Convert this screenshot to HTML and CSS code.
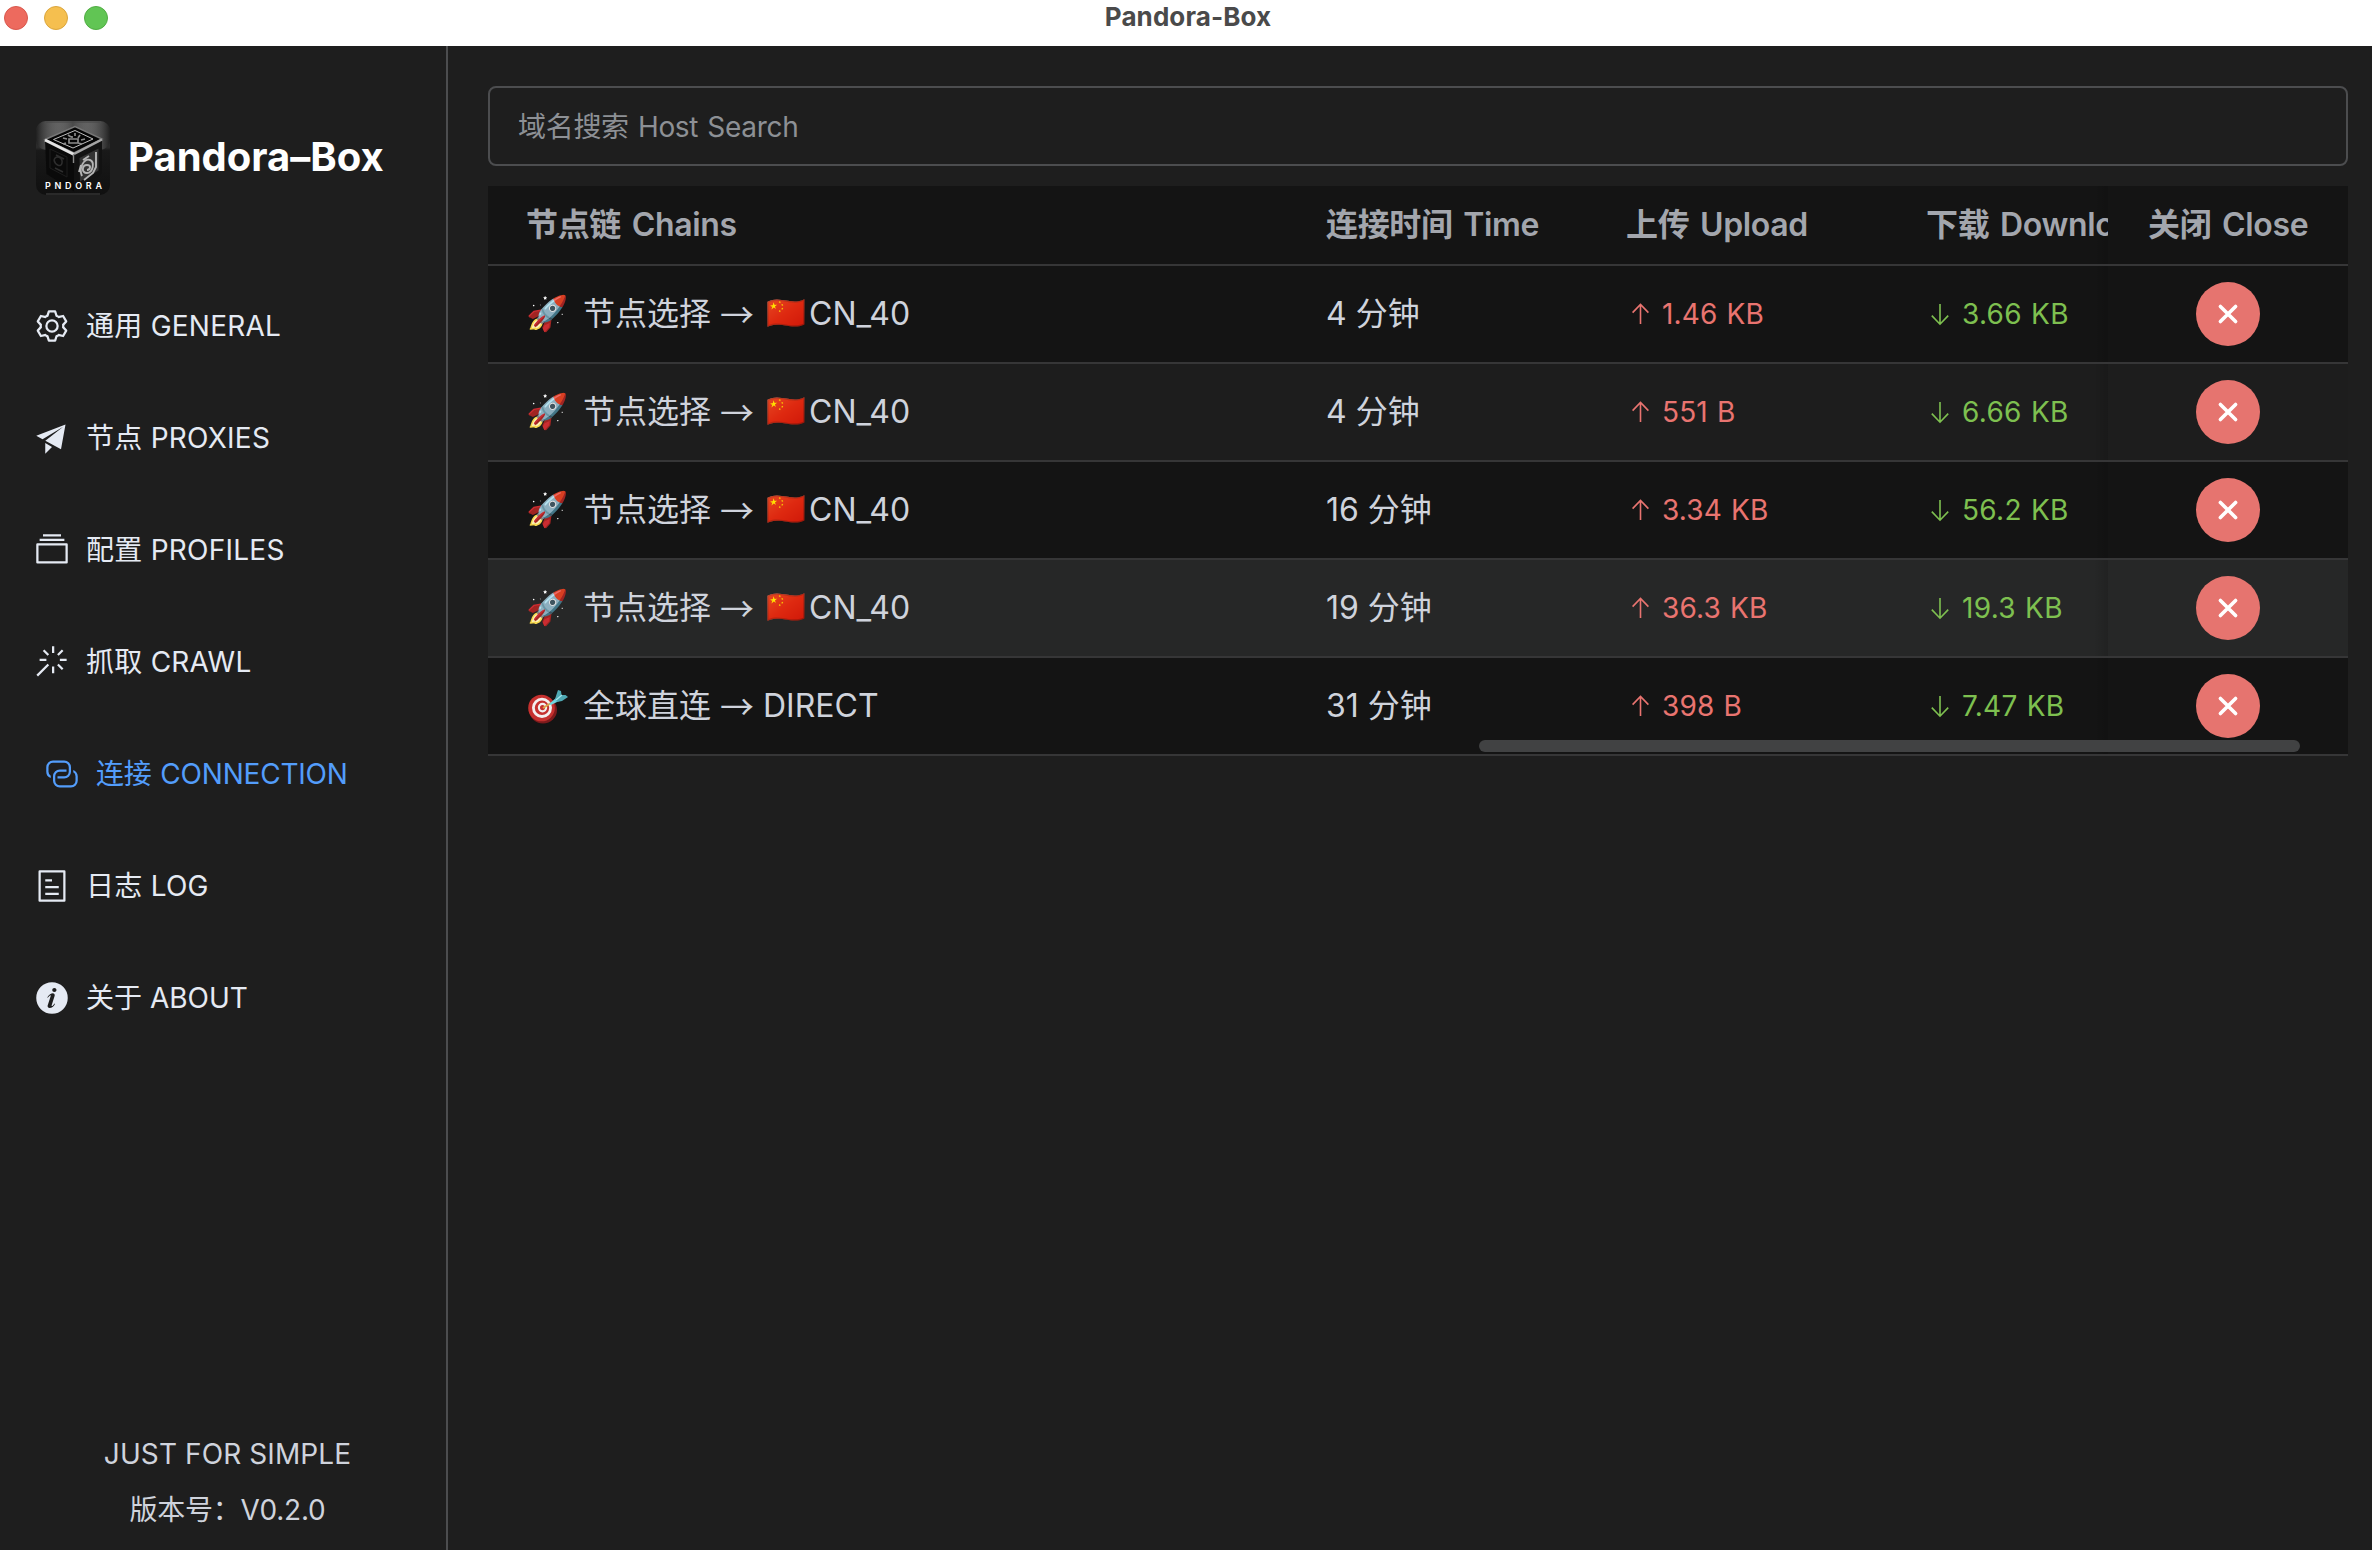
FILE: index.html
```html
<!DOCTYPE html>
<html lang="zh-CN">
<head>
<meta charset="utf-8">
<title>Pandora-Box</title>
<link rel="stylesheet" href="styles.css">
</head>
<body>
<svg class="sprite" aria-hidden="true">
  <symbol id="i-up" viewBox="0 0 28 28"><path d="M14.5 24V4.4M6.6 12.6l7.9-8.2 7.9 8.2" fill="none" stroke="currentColor" stroke-width="1.6"/></symbol>
  <symbol id="i-down" viewBox="0 0 28 28"><path d="M14 4v20.2M5.8 15.6l8.2 8.6 8.2-8.6" fill="none" stroke="currentColor" stroke-width="1.6"/></symbol>
  <symbol id="i-close" viewBox="0 0 28 28"><path d="M6.4 6.4l15.2 15.2M21.6 6.4L6.4 21.6" fill="none" stroke="currentColor" stroke-width="3.6" stroke-linecap="round"/></symbol>
</svg>

<header class="titlebar">
  <div class="lights"><i class="light red"></i><i class="light yellow"></i><i class="light green"></i></div>
  <h1 class="window-title">Pandora-Box</h1>
</header>

<div class="app">
  <aside class="sidebar">
    <div class="brand">
      <svg class="logo" viewBox="0 0 74 74">
        <defs>
          <linearGradient id="bg" x1="0" y1="0" x2="0" y2="1"><stop offset="0" stop-color="#2c2c2c"/><stop offset=".36" stop-color="#2a2a2a"/><stop offset=".4" stop-color="#191919"/><stop offset="1" stop-color="#101010"/></linearGradient>
          <linearGradient id="side" x1="0" y1="0" x2="1" y2="0"><stop offset="0" stop-color="#1e1e1e" stop-opacity=".9"/><stop offset=".5" stop-color="#fff" stop-opacity=".14"/><stop offset="1" stop-color="#1e1e1e" stop-opacity=".9"/></linearGradient>
        </defs>
        <rect width="74" height="74" rx="10" fill="url(#bg)"/>
        <rect width="74" height="29" rx="10" fill="url(#side)"/>
        <path d="M9 19L38 32.500v38L10.500 53z" fill="#0a0a0a"/>
        <path d="M38 32.500L66 19v34L38 70.500z" fill="#121212"/>
        <path d="M9 18.500L39 5.500l27 12.500-28 14z" fill="#050505" stroke="#777" stroke-width="1.400"/>
        <path d="M17.500 18.500L39 9.500l18 8.500-20 9z" fill="#050505" stroke="#bdbdbd" stroke-width="1"/>
        <path d="M9 19l29 14.500" fill="none" stroke="#e4e4e4" stroke-width="3"/>
        <path d="M38 33l28-14.500" fill="none" stroke="#a5a5a5" stroke-width="2.400"/>
        <path d="M37.500 33v9" stroke="#888" stroke-width="1.400"/>
        <path d="M33 18h9v4h-9zM27 17l4 1m1-4l3 2m4-4v3m5-1l-2 3m7 1l-4 1m1 4l-4-1m-12 0l-3 1m9-6v-2" fill="none" stroke="#8a8a8a" stroke-width="1.700"/>
        <path d="M43.500 37l19-9.500v22l-18.500 11z" fill="#333"/>
        <path d="M46 55c-4-9 3-18 8-16s3 13-3 13-5-8 0-8 3 5 0 5m9-18v15l-3 6-9 7m5-24l-6 4m-2 5l-2 7" fill="none" stroke="#b5b5b5" stroke-width="1.900"/>
        <path d="M14 28l17 8v20l-17-9z" fill="none" stroke="#1d1d1d"/>
        <path d="M18 39c2-6 9-2 8 3s-7 2-8-3m2-5l8 4m-9 9l8 4" fill="none" stroke="#2e2e2e" stroke-width="1.500"/>
        <path d="M10 1h54M10 73h54" stroke="#444"/>
        <text class="logo-text" x="9" y="68" textLength="57">PNDORA</text>
      </svg>
      <span class="brand-name">Pandora–Box</span>
    </div>

    <nav class="menu">
      <a class="item"><svg class="icon" viewBox="0 0 1024 1024"><path d="M600.704 64a32 32 0 0 1 30.464 22.208l35.2 109.376c14.784 7.232 28.928 15.36 42.432 24.512l112.384-24.192a32 32 0 0 1 34.432 15.36L944.32 364.8a32 32 0 0 1-4.032 37.504l-77.12 85.120a357.120 357.120 0 0 1 0 49.024l77.120 85.248a32 32 0 0 1 4.032 37.504l-88.704 153.600a32 32 0 0 1-34.432 15.296L708.800 803.904c-13.440 9.088-27.648 17.280-42.368 24.512l-35.264 109.376A32 32 0 0 1 600.704 960H423.296a32 32 0 0 1-30.464-22.208L357.696 828.480a351.616 351.616 0 0 1-42.560-24.640l-112.320 24.256a32 32 0 0 1-34.432-15.360L79.680 659.200a32 32 0 0 1 4.032-37.504l77.120-85.248a357.120 357.120 0 0 1 0-48.896l-77.120-85.248A32 32 0 0 1 79.680 364.800l88.704-153.600a32 32 0 0 1 34.432-15.296l112.320 24.256c13.568-9.152 27.776-17.408 42.560-24.640l35.200-109.312A32 32 0 0 1 423.232 64H600.640zm-23.424 64H446.720l-36.352 113.088-24.512 11.968a294.113 294.113 0 0 0-34.816 20.096l-22.656 15.360-116.224-25.088-65.280 113.152 79.680 88.192-1.920 27.136a293.120 293.120 0 0 0 0 40.192l1.920 27.136-79.808 88.192 65.344 113.152 116.224-25.024 22.656 15.296a294.113 294.113 0 0 0 34.816 20.096l24.512 11.968L446.720 896h130.688l36.480-113.152 24.448-11.904a288.282 288.282 0 0 0 34.752-20.096l22.592-15.296 116.288 25.024 65.280-113.152-79.744-88.192 1.920-27.136a293.120 293.120 0 0 0 0-40.256l-1.920-27.136 79.808-88.128-65.344-113.152-116.288 24.960-22.592-15.232a287.616 287.616 0 0 0-34.752-20.096l-24.448-11.904L577.344 128zM512 320a192 192 0 1 1 0 384 192 192 0 0 1 0-384zm0 64a128 128 0 1 0 0 256 128 128 0 0 0 0-256z"/></svg><span>通用 GENERAL</span></a>
      <a class="item"><svg class="icon" viewBox="0 0 1024 1024"><path d="m64 448 832-320-128 704-446.080-243.328L832 192 242.816 545.536 64 448zm256 512V657.024L512 768 320 960z"/></svg><span>节点 PROXIES</span></a>
      <a class="item"><svg class="icon" viewBox="0 0 1024 1024"><path d="M128 384v448h768V384H128zm-32-64h832a32 32 0 0 1 32 32v512a32 32 0 0 1-32 32H96a32 32 0 0 1-32-32V352a32 32 0 0 1 32-32zm64-128h704v64H160zm96-128h512v64H256z"/></svg><span>配置 PROFILES</span></a>
      <a class="item"><svg class="icon" viewBox="0 0 1024 1024"><path d="M512 64h64v192h-64V64zm0 576h64v192h-64V640zM160 480v-64h192v64H160zm576 0v-64h192v64H736zM249.856 199.040l45.248-45.184L430.848 289.600 385.600 334.848 249.856 199.104zM657.152 606.400l45.248-45.248 135.744 135.744-45.248 45.248L657.152 606.400zM114.048 923.200 68.800 877.952l316.800-316.800 45.248 45.248-316.800 316.800zM702.400 334.848 657.152 289.600l135.744-135.744 45.248 45.248L702.400 334.848z"/></svg><span>抓取 CRAWL</span></a>
      <a class="item active"><svg class="icon" viewBox="0 0 1024 1024"><path d="M640 384v64H448a128 128 0 0 0-128 128v128a128 128 0 0 0 128 128h320a128 128 0 0 0 128-128V576a128 128 0 0 0-64-110.848V394.880c74.560 26.368 128 97.472 128 181.056v128a192 192 0 0 1-192 192H448a192 192 0 0 1-192-192V576a192 192 0 0 1 192-192h192z"/><path d="M384 640v-64h192a128 128 0 0 0 128-128V320a128 128 0 0 0-128-128H256a128 128 0 0 0-128 128v128a128 128 0 0 0 64 110.848v70.272A192.064 192.064 0 0 1 64 448V320a192 192 0 0 1 192-192h320a192 192 0 0 1 192 192v128a192 192 0 0 1-192 192H384z"/></svg><span>连接 CONNECTION</span></a>
      <a class="item"><svg class="icon" viewBox="0 0 1024 1024"><path d="M192 128v768h640V128H192zm-32-64h704a32 32 0 0 1 32 32v832a32 32 0 0 1-32 32H160a32 32 0 0 1-32-32V96a32 32 0 0 1 32-32zm160 448h384v64H320v-64zm0-192h192v64H320v-64zm0 384h384v64H320v-64z"/></svg><span>日志 LOG</span></a>
      <a class="item"><svg class="icon" viewBox="0 0 1024 1024"><path d="M512 64a448 448 0 1 1 0 896.064A448 448 0 0 1 512 64zm67.200 275.072c33.280 0 60.288-23.104 60.288-57.344s-27.072-57.344-60.288-57.344c-33.280 0-60.160 23.104-60.160 57.344s26.880 57.344 60.160 57.344zM590.912 699.200c0-6.848 2.368-24.640 1.024-34.752l-52.608 60.544c-10.880 11.456-24.512 19.392-30.912 17.280a12.992 12.992 0 0 1-8.256-14.720l87.680-276.992c7.168-35.136-12.544-67.200-54.336-71.296-44.096 0-108.992 44.736-148.480 101.504 0 6.784-1.280 23.680.064 33.792l52.544-60.608c10.880-11.328 23.552-19.328 29.952-17.152a12.800 12.800 0 0 1 7.808 16.128L388.480 728.576c-10.048 32.256 8.960 63.872 55.040 71.040 67.840 0 107.904-43.648 147.456-100.416z"/></svg><span>关于 ABOUT</span></a>
    </nav>

    <footer class="about">
      <p>JUST FOR SIMPLE</p>
      <p class="version">版本号：V0.2.0</p>
    </footer>
  </aside>

  <main class="content">
    <input class="search" type="text" placeholder="域名搜索 Host Search">

    <section class="table">
      <div class="row head">
        <div class="cell">节点链 Chains</div>
        <div class="cell">连接时间 Time</div>
        <div class="cell">上传 Upload</div>
        <div class="cell">下载 Download</div>
        <div class="cell fixed">关闭 Close</div>
      </div>
      <div class="row">
        <div class="cell"><span class="emoji">🚀</span><span>节点选择</span><span class="arrow">→</span><span class="flag">🇨🇳</span><span>CN_40</span></div>
        <div class="cell">4 分钟</div>
        <div class="cell up"><svg><use href="#i-up"/></svg><span>1.46 KB</span></div>
        <div class="cell down"><svg><use href="#i-down"/></svg><span>3.66 KB</span></div>
        <div class="cell fixed"><button class="close"><svg><use href="#i-close"/></svg></button></div>
      </div>
      <div class="row striped">
        <div class="cell"><span class="emoji">🚀</span><span>节点选择</span><span class="arrow">→</span><span class="flag">🇨🇳</span><span>CN_40</span></div>
        <div class="cell">4 分钟</div>
        <div class="cell up"><svg><use href="#i-up"/></svg><span>551 B</span></div>
        <div class="cell down"><svg><use href="#i-down"/></svg><span>6.66 KB</span></div>
        <div class="cell fixed"><button class="close"><svg><use href="#i-close"/></svg></button></div>
      </div>
      <div class="row">
        <div class="cell"><span class="emoji">🚀</span><span>节点选择</span><span class="arrow">→</span><span class="flag">🇨🇳</span><span>CN_40</span></div>
        <div class="cell">16 分钟</div>
        <div class="cell up"><svg><use href="#i-up"/></svg><span>3.34 KB</span></div>
        <div class="cell down"><svg><use href="#i-down"/></svg><span>56.2 KB</span></div>
        <div class="cell fixed"><button class="close"><svg><use href="#i-close"/></svg></button></div>
      </div>
      <div class="row hovered">
        <div class="cell"><span class="emoji">🚀</span><span>节点选择</span><span class="arrow">→</span><span class="flag">🇨🇳</span><span>CN_40</span></div>
        <div class="cell">19 分钟</div>
        <div class="cell up"><svg><use href="#i-up"/></svg><span>36.3 KB</span></div>
        <div class="cell down"><svg><use href="#i-down"/></svg><span>19.3 KB</span></div>
        <div class="cell fixed"><button class="close"><svg><use href="#i-close"/></svg></button></div>
      </div>
      <div class="row">
        <div class="cell">
          <svg class="dart" viewBox="0 0 40 36">
            <ellipse cx="15" cy="22" rx="14" ry="13.500" fill="#7d1a1c"/>
            <ellipse cx="13.500" cy="20" rx="13.300" ry="13.300" fill="#c5302e"/>
            <ellipse cx="14" cy="19.800" rx="8.600" ry="8.700" fill="none" stroke="#f4eeee" stroke-width="2.800"/>
            <ellipse cx="14.500" cy="19.600" rx="3.600" ry="3.800" fill="#c5302e" stroke="#f4eeee" stroke-width="2.200"/>
            <path d="M15 20l8-5" stroke="#d9a646" stroke-width="2"/>
            <path d="M21 16l7-6 3 3-8 4z" fill="#6fd6e0"/>
            <path d="M27 11l3-9 3 1 .500 4 4 0 2.500 2-6 4-5 1z" fill="#4fa9b4"/>
            <path d="M28 12l6-5" stroke="#a4e6ec" stroke-width="1.200"/>
          </svg>
          <span>全球直连</span><span class="arrow direct">→</span><span>DIRECT</span>
        </div>
        <div class="cell">31 分钟</div>
        <div class="cell up"><svg><use href="#i-up"/></svg><span>398 B</span></div>
        <div class="cell down"><svg><use href="#i-down"/></svg><span>7.47 KB</span></div>
        <div class="cell fixed"><button class="close"><svg><use href="#i-close"/></svg></button></div>
      </div>
      <div class="scrollbar"></div>
    </section>
  </main>
</div>
</body>
</html>
```

FILE: styles.css
```css
* { box-sizing: border-box; }

body {
  margin: 0;
  height: 1550px;
  display: flex;
  flex-direction: column;
  background: #1e1e1e;
  color: #cfd3dc;
  font-family: Inter, "Noto Sans CJK SC", sans-serif;
  overflow: hidden;
}

.sprite { display: none; }

.titlebar {
  flex: none;
  height: 46px;
  display: grid;
  grid-template-columns: 1fr auto 1fr;
  background: #fff;
}
.lights { display: flex; gap: 16px; padding: 6px 4px; }
.light { width: 24px; height: 24px; border-radius: 50%; }
.red { background: #ed6a5e; border: 1px solid #d9584d; }
.yellow { background: #f5bf4f; border: 1px solid #dba63d; }
.green { background: #61c554; border: 1px solid #50ad43; }
.window-title { margin: 0; padding-left: 4px; color: #4a4a4a; font-size: 26px; font-weight: 700; line-height: 33px; letter-spacing: 0.1px; }

.app { flex: 1; display: flex; min-height: 0; }

.sidebar {
  flex: none;
  width: 448px;
  display: flex;
  flex-direction: column;
  border-right: 2px solid #4c4d4f;
}
.brand { display: flex; align-items: center; gap: 18px; padding: 75px 0 0 36px; height: 149px; }
.logo { width: 74px; height: 74px; flex: none; }
.logo-text { fill: #fff; font: 600 9px Inter, sans-serif; }
.brand-name { padding-bottom: 2px; color: #fff; font-size: 40px; font-weight: 700; line-height: 72px; white-space: nowrap; }

.menu { display: flex; flex-direction: column; gap: 56px; margin-top: 103px; }
.item {
  display: flex;
  align-items: center;
  gap: 16px;
  height: 56px;
  padding-left: 34px;
  color: #e5eaf3;
  font-size: 28px;
  line-height: 56px;
  letter-spacing: 0.25px;
}
.item.active { padding-left: 44px; color: #539dfb; letter-spacing: -0.2px; word-spacing: 1px; }
.item:last-child { letter-spacing: 0; }
.icon { width: 36px; height: 36px; fill: currentColor; }

.about { margin-top: auto; padding: 0 0 12px 9px; text-align: center; font-size: 28px; line-height: 56px; }
.about p { margin: 0; letter-spacing: 0.1px; }
.about .version { letter-spacing: -0.2px; }

.content { flex: 1; padding: 40px 24px 0 40px; }
.search {
  display: block;
  width: 100%;
  height: 80px;
  padding: 2px 28px 0;
  border: 2px solid #4c4d4f;
  border-radius: 8px;
  background: transparent;
  font-family: inherit;
  font-size: 28px;
  letter-spacing: -0.3px;
  word-spacing: 1.5px;
}
.search::placeholder { color: #8d9095; opacity: 1; }

.table { position: relative; margin-top: 20px; }
.row {
  display: grid;
  grid-template-columns: 798px 300px 300px 222px 240px;
  height: 98px;
  background: #141414;
  border-bottom: 2px solid #363637;
}
.row.head { height: 80px; color: #a3a6ad; font-weight: 600; }
.row.striped { background: #1d1d1d; }
.row.hovered { background: #262727; }
.cell {
  display: flex;
  align-items: center;
  padding-left: 40px;
  overflow: hidden;
  white-space: nowrap;
  font-size: 32px;
  line-height: 96px;
}
.head .cell { display: block; line-height: 78px; letter-spacing: -0.35px; word-spacing: 3px; }
.head .cell:first-child { padding-left: 38px; }
.row:not(.head) .cell:nth-child(2) { padding-bottom: 1px; }
.cell:nth-child(4) { background: linear-gradient(to right, transparent 208px, rgba(0, 0, 0, .13)); }
.emoji { width: 55px; margin-left: -2px; margin-right: 2px; font-size: 34px; line-height: 94px; padding-bottom: 2px; }
.arrow { width: 51px; padding-left: 9px; font-family: "Noto Sans CJK SC", sans-serif; font-size: 34px; }
.arrow.direct { width: 52px; }
.flag { width: 47px; padding-left: 4px; font-size: 32px; line-height: 94px; padding-bottom: 2px; }
.up, .down { font-size: 28px; gap: 8px; }
.up { color: #e97470; letter-spacing: 0.15px; word-spacing: 1px; }
.down { color: #7ec050; letter-spacing: 0.3px; word-spacing: 1px; }
.cell svg { width: 28px; height: 28px; flex: none; }
.cell .dart { width: 40px; height: 36px; margin-right: 15px; }
.row:not(.head) .fixed { justify-content: center; padding: 0; }
.close {
  display: flex;
  align-items: center;
  justify-content: center;
  width: 64px;
  height: 64px;
  padding: 0;
  border: 0;
  border-radius: 50%;
  background: #e6746f;
  color: #fff;
}

.scrollbar {
  position: absolute;
  left: 991px;
  right: 48px;
  bottom: 4px;
  height: 12px;
  border-radius: 6px;
  background: #414243;
}
```
